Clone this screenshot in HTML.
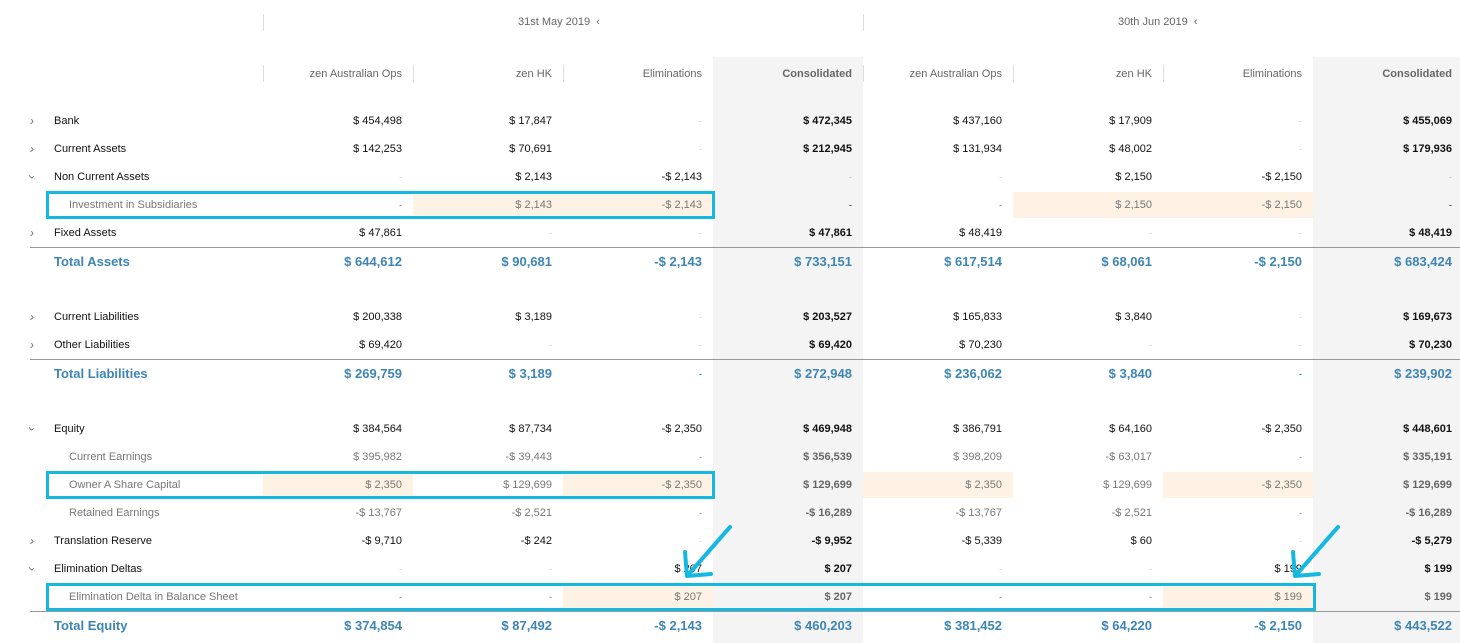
<!DOCTYPE html>
<html><head><meta charset="utf-8"><style>
*{margin:0;padding:0;box-sizing:border-box}
body{width:1460px;height:643px;background:#fff;font-family:"Liberation Sans",sans-serif;font-size:11px;color:#111;position:relative;overflow:hidden}
.g{position:absolute;background:#f4f4f4;top:57px;bottom:0;width:150px}
.hl{position:absolute;background:#fdf2e3;height:26px}
.r{position:absolute;left:0;width:1460px;height:28px;line-height:28px}
.r span{position:absolute;width:139px;text-align:right;white-space:nowrap}
.r .l{left:54px;text-align:left;width:200px}
.r .s{left:69px;text-align:left;width:200px;color:#777}
.c1{left:263px}.c2{left:413px}.c3{left:563px}.c4{left:713px;font-weight:bold}
.c5{left:863px}.c6{left:1013px}.c7{left:1163px}.c8{left:1313px;font-weight:bold}
.d{color:#ccc;font-size:9px}
.sub span{color:#777}
.sub .c4,.sub .c8{color:#666}
.t{font-size:13px;font-weight:bold;color:#3d85b5}
.t span{color:#3d85b5}
.ch{position:absolute;left:30px;color:#666;font-size:12px}
.line{position:absolute;left:30px;right:0;height:1px;background:#999}
.hd{position:absolute;color:#666;font-size:11px;text-align:right;width:139px}
.vs{position:absolute;width:1px;background:#ddd}
.box{position:absolute;border:3px solid #14b8e0}
</style></head><body>
<div class="g" style="left:713px"></div>
<div class="g" style="left:1313px;width:147px"></div>

<div class="vs" style="left:263px;top:14px;height:17px"></div>
<div class="vs" style="left:863px;top:14px;height:17px"></div>
<div style="position:absolute;left:518px;top:16px;color:#666">31st May 2019 &nbsp;‹</div>
<div style="position:absolute;left:1118px;top:16px;color:#666">30th Jun 2019 &nbsp;‹</div>

<div class="vs" style="left:263px;top:65px;height:17px"></div>
<div class="vs" style="left:413px;top:65px;height:17px"></div>
<div class="vs" style="left:563px;top:65px;height:17px"></div>
<div class="vs" style="left:863px;top:65px;height:17px"></div>
<div class="vs" style="left:1013px;top:65px;height:17px"></div>
<div class="vs" style="left:1163px;top:65px;height:17px"></div>
<div class="hd" style="left:263px;top:68px">zen Australian Ops</div>
<div class="hd" style="left:413px;top:68px">zen HK</div>
<div class="hd" style="left:563px;top:68px">Eliminations</div>
<div class="hd" style="left:713px;top:68px;font-weight:bold">Consolidated</div>
<div class="hd" style="left:863px;top:68px">zen Australian Ops</div>
<div class="hd" style="left:1013px;top:68px">zen HK</div>
<div class="hd" style="left:1163px;top:68px">Eliminations</div>
<div class="hd" style="left:1313px;top:68px;font-weight:bold">Consolidated</div>

<div class="hl" style="left:413px;width:300px;top:192px"></div>
<div class="hl" style="left:1013px;width:300px;top:192px"></div>
<div class="hl" style="left:263px;width:150px;top:472px"></div>
<div class="hl" style="left:563px;width:150px;top:472px"></div>
<div class="hl" style="left:863px;width:150px;top:472px"></div>
<div class="hl" style="left:1163px;width:150px;top:472px"></div>
<div class="hl" style="left:563px;width:150px;top:584px"></div>
<div class="hl" style="left:1163px;width:150px;top:584px"></div>

<div class="r" style="top:107px"><i class="ch">›</i><span class="l">Bank</span><span class="c1">$ 454,498</span><span class="c2">$ 17,847</span><span class="c3 d">-</span><span class="c4">$ 472,345</span><span class="c5">$ 437,160</span><span class="c6">$ 17,909</span><span class="c7 d">-</span><span class="c8">$ 455,069</span></div>
<div class="r" style="top:135px"><i class="ch">›</i><span class="l">Current Assets</span><span class="c1">$ 142,253</span><span class="c2">$ 70,691</span><span class="c3 d">-</span><span class="c4">$ 212,945</span><span class="c5">$ 131,934</span><span class="c6">$ 48,002</span><span class="c7 d">-</span><span class="c8">$ 179,936</span></div>
<div class="r" style="top:163px"><i class="ch" style="transform:rotate(90deg);left:30px">›</i><span class="l">Non Current Assets</span><span class="c1 d">-</span><span class="c2">$ 2,143</span><span class="c3">-$ 2,143</span><span class="c4 d">-</span><span class="c5 d">-</span><span class="c6">$ 2,150</span><span class="c7">-$ 2,150</span><span class="c8 d">-</span></div>
<div class="r sub" style="top:191px"><span class="s">Investment in Subsidiaries</span><span class="c1 d">-</span><span class="c2">$ 2,143</span><span class="c3">-$ 2,143</span><span class="c4 d">-</span><span class="c5 d">-</span><span class="c6">$ 2,150</span><span class="c7">-$ 2,150</span><span class="c8 d">-</span></div>
<div class="r" style="top:219px"><i class="ch">›</i><span class="l">Fixed Assets</span><span class="c1">$ 47,861</span><span class="c2 d">-</span><span class="c3 d">-</span><span class="c4">$ 47,861</span><span class="c5">$ 48,419</span><span class="c6 d">-</span><span class="c7 d">-</span><span class="c8">$ 48,419</span></div>
<div class="line" style="top:247px"></div>
<div class="r t" style="top:248px"><span class="l">Total Assets</span><span class="c1">$ 644,612</span><span class="c2">$ 90,681</span><span class="c3">-$ 2,143</span><span class="c4">$ 733,151</span><span class="c5">$ 617,514</span><span class="c6">$ 68,061</span><span class="c7">-$ 2,150</span><span class="c8">$ 683,424</span></div>

<div class="r" style="top:303px"><i class="ch">›</i><span class="l">Current Liabilities</span><span class="c1">$ 200,338</span><span class="c2">$ 3,189</span><span class="c3 d">-</span><span class="c4">$ 203,527</span><span class="c5">$ 165,833</span><span class="c6">$ 3,840</span><span class="c7 d">-</span><span class="c8">$ 169,673</span></div>
<div class="r" style="top:331px"><i class="ch">›</i><span class="l">Other Liabilities</span><span class="c1">$ 69,420</span><span class="c2 d">-</span><span class="c3 d">-</span><span class="c4">$ 69,420</span><span class="c5">$ 70,230</span><span class="c6 d">-</span><span class="c7 d">-</span><span class="c8">$ 70,230</span></div>
<div class="line" style="top:359px"></div>
<div class="r t" style="top:360px"><span class="l">Total Liabilities</span><span class="c1">$ 269,759</span><span class="c2">$ 3,189</span><span class="c3 d">-</span><span class="c4">$ 272,948</span><span class="c5">$ 236,062</span><span class="c6">$ 3,840</span><span class="c7 d">-</span><span class="c8">$ 239,902</span></div>

<div class="r" style="top:415px"><i class="ch" style="transform:rotate(90deg)">›</i><span class="l">Equity</span><span class="c1">$ 384,564</span><span class="c2">$ 87,734</span><span class="c3">-$ 2,350</span><span class="c4">$ 469,948</span><span class="c5">$ 386,791</span><span class="c6">$ 64,160</span><span class="c7">-$ 2,350</span><span class="c8">$ 448,601</span></div>
<div class="r sub" style="top:443px"><span class="s">Current Earnings</span><span class="c1">$ 395,982</span><span class="c2">-$ 39,443</span><span class="c3 d">-</span><span class="c4">$ 356,539</span><span class="c5">$ 398,209</span><span class="c6">-$ 63,017</span><span class="c7 d">-</span><span class="c8">$ 335,191</span></div>
<div class="r sub" style="top:471px"><span class="s">Owner A Share Capital</span><span class="c1">$ 2,350</span><span class="c2">$ 129,699</span><span class="c3">-$ 2,350</span><span class="c4">$ 129,699</span><span class="c5">$ 2,350</span><span class="c6">$ 129,699</span><span class="c7">-$ 2,350</span><span class="c8">$ 129,699</span></div>
<div class="r sub" style="top:499px"><span class="s">Retained Earnings</span><span class="c1">-$ 13,767</span><span class="c2">-$ 2,521</span><span class="c3 d">-</span><span class="c4">-$ 16,289</span><span class="c5">-$ 13,767</span><span class="c6">-$ 2,521</span><span class="c7 d">-</span><span class="c8">-$ 16,289</span></div>
<div class="r" style="top:527px"><i class="ch">›</i><span class="l">Translation Reserve</span><span class="c1">-$ 9,710</span><span class="c2">-$ 242</span><span class="c3 d">-</span><span class="c4">-$ 9,952</span><span class="c5">-$ 5,339</span><span class="c6">$ 60</span><span class="c7 d">-</span><span class="c8">-$ 5,279</span></div>
<div class="r" style="top:555px"><i class="ch" style="transform:rotate(90deg)">›</i><span class="l">Elimination Deltas</span><span class="c1 d">-</span><span class="c2 d">-</span><span class="c3">$ 207</span><span class="c4">$ 207</span><span class="c5 d">-</span><span class="c6 d">-</span><span class="c7">$ 199</span><span class="c8">$ 199</span></div>
<div class="r sub" style="top:583px"><span class="s">Elimination Delta in Balance Sheet</span><span class="c1 d">-</span><span class="c2 d">-</span><span class="c3">$ 207</span><span class="c4">$ 207</span><span class="c5 d">-</span><span class="c6 d">-</span><span class="c7">$ 199</span><span class="c8">$ 199</span></div>
<div class="line" style="top:611px"></div>
<div class="r t" style="top:612px"><span class="l">Total Equity</span><span class="c1">$ 374,854</span><span class="c2">$ 87,492</span><span class="c3">-$ 2,143</span><span class="c4">$ 460,203</span><span class="c5">$ 381,452</span><span class="c6">$ 64,220</span><span class="c7">-$ 2,150</span><span class="c8">$ 443,522</span></div>

<div class="box" style="left:46px;top:191px;width:669px;height:28px"></div>
<div class="box" style="left:46px;top:471px;width:669px;height:28px"></div>
<div class="box" style="left:46px;top:583px;width:1270px;height:28px"></div>

<svg style="position:absolute;left:0;top:0" width="1460" height="643">
<g stroke="#14b8e0" stroke-width="4" fill="none" stroke-linecap="round" stroke-linejoin="round">
<path d="M730 527 L688 575"/><path d="M685 552 L687 576 L711 574"/>
<path d="M1338 527 L1296 575"/><path d="M1293 552 L1295 576 L1319 574"/>
</g></svg>
</body></html>
